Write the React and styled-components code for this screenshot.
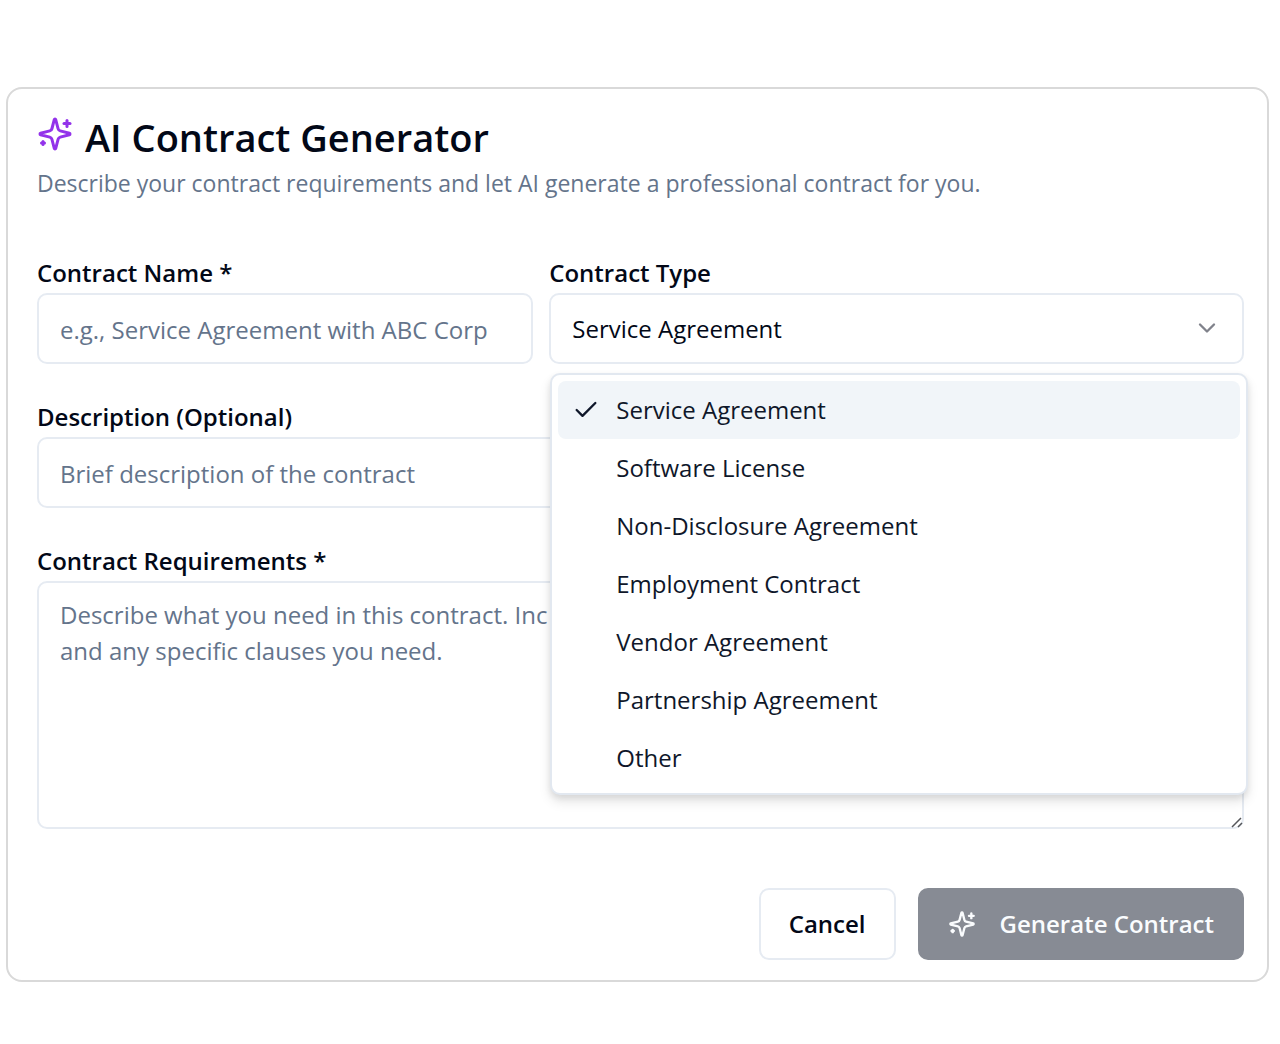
import React, { useState } from "react";
import styled, { createGlobalStyle } from "styled-components";
import { ChevronDown, Check } from "lucide-react";

const GlobalStyle = createGlobalStyle`
  *, *::before, *::after { box-sizing: border-box; }
  body {
    margin: 0;
    background: #ffffff;
    color: #020817;
    font-family: "Open Sans", "Noto Sans", sans-serif;
    font-size: 24px;
    line-height: 36px;
  }
  button, input, select, textarea { font: inherit; color: inherit; }
`;

const Page = styled.main`
  padding: 87px 11px 48px 6px;
`;

const Card = styled.section`
  border: 2px solid #d9d9d9;
  border-radius: 16px;
  padding: 22px 23px 20px 29px;
  background: #ffffff;
`;

const Header = styled.header`
  display: flex;
  flex-direction: column;
  margin-bottom: 52px;
`;

const Title = styled.h1`
  display: flex;
  align-items: center;
  gap: 12px;
  margin: 0;
  font-size: 38px;
  line-height: 52px;
  font-weight: 600;
`;

const TitleIcon = styled.span`
  display: flex;
  flex: none;
  color: #9333ea;
  margin-bottom: 6px;
`;

const Subtitle = styled.p`
  margin: 0;
  font-size: 23px;
  line-height: 40px;
  color: #64748b;
`;

const Form = styled.form`
  display: grid;
  grid-template-columns: minmax(0, 5fr) minmax(0, 7fr);
  gap: 35px 16px;
`;

const Field = styled.div`
  display: flex;
  flex-direction: column;
  gap: 2px;
  min-width: 0;
  grid-column: ${(p) => (p.$wide ? "1 / -1" : "auto")};
`;

const Label = styled.label`
  font-weight: 600;
`;

const control = `
  width: 100%;
  border: 2px solid #e6ebf2;
  border-radius: 10px;
  background: #ffffff;
  outline: none;
  &::placeholder { color: #64748b; opacity: 1; }
`;

const Input = styled.input`
  ${control}
  height: 71px;
  padding: 2px 21px 0;
`;

const TextAreaBox = styled.div`
  position: relative;
`;

const TextArea = styled.textarea`
  ${control}
  display: block;
  height: 248px;
  padding: 14px 21px;
  resize: vertical;
  overflow: hidden;
  &::-webkit-resizer { background: transparent; }
`;

const Grip = styled.svg`
  position: absolute;
  right: 1px;
  bottom: 1px;
  pointer-events: none;
`;

const SelectBox = styled.div`
  position: relative;
`;

const Select = styled.select`
  ${control}
  display: block;
  appearance: none;
  height: 71px;
  padding: 0 64px 0 21px;
`;

const SelectArrow = styled(ChevronDown)`
  position: absolute;
  right: 23px;
  top: 21px;
  color: #80828b;
  pointer-events: none;
`;

const Options = styled.ul`
  position: absolute;
  z-index: 1;
  top: calc(100% + 9px);
  left: 1px;
  right: -4px;
  margin: 0;
  padding: 6px;
  list-style: none;
  border: 2px solid #e2e8f0;
  border-radius: 10px;
  background: #ffffff;
  box-shadow: 0 7px 12px rgba(0, 0, 0, 0.1), 0 3px 6px rgba(0, 0, 0, 0.08);
`;

const Option = styled.li`
  display: flex;
  align-items: center;
  gap: 16px;
  height: 58px;
  padding: 0 14px;
  border-radius: 8px;
  color: #0f172a;
  background: ${(p) => (p.$active ? "#f1f5f9" : "transparent")};
`;

const Tick = styled.span`
  display: flex;
  flex: none;
  width: 28px;
`;

const Actions = styled.footer`
  grid-column: 1 / -1;
  display: flex;
  justify-content: flex-end;
  gap: 22px;
  margin-top: 24px;
`;

const Button = styled.button`
  display: flex;
  align-items: center;
  gap: 24px;
  height: 72px;
  padding: 0 28px;
  border: 2px solid ${(p) => (p.$primary ? "#878b94" : "#e6ebf2")};
  border-radius: 10px;
  background: ${(p) => (p.$primary ? "#878b94" : "#ffffff")};
  color: ${(p) => (p.$primary ? "#fafcfe" : "#020817")};
  font-weight: 600;
`;

function SparklesIcon({ size }) {
  return (
    <svg
      width={size}
      height={size}
      viewBox="0 0 24 24"
      fill="none"
      stroke="currentColor"
      strokeWidth="2"
      strokeLinecap="round"
      strokeLinejoin="round"
      aria-hidden="true"
    >
      <path d="M9.937 15.5A2 2 0 0 0 8.5 14.063l-6.135-1.582a.5.5 0 0 1 0-.962L8.5 9.936A2 2 0 0 0 9.937 8.5l1.582-6.135a.5.5 0 0 1 .963 0L14.063 8.5A2 2 0 0 0 15.5 9.937l6.135 1.581a.5.5 0 0 1 0 .964L15.5 14.063a2 2 0 0 0-1.437 1.437l-1.582 6.135a.5.5 0 0 1-.963 0z" />
      <path d="M20 3v4" />
      <path d="M22 5h-4" />
      <path d="M4 17v2" />
      <path d="M5 18H3" />
    </svg>
  );
}

const contractTypes = [
  "Service Agreement",
  "Software License",
  "Non-Disclosure Agreement",
  "Employment Contract",
  "Vendor Agreement",
  "Partnership Agreement",
  "Other",
];

const requirementsHint =
  "Describe what you need in this contract. Inc parties, scope, payment terms, dates,\nand any specific clauses you need.";

export default function App() {
  const [type, setType] = useState(contractTypes[0]);

  return (
    <>
      <GlobalStyle />
      <Page>
        <Card>
          <Header>
            <Title>
              <TitleIcon>
                <SparklesIcon size={36} />
              </TitleIcon>
              AI Contract Generator
            </Title>
            <Subtitle>
              Describe your contract requirements and let AI generate a professional contract for you.
            </Subtitle>
          </Header>
          <Form onSubmit={(e) => e.preventDefault()}>
            <Field>
              <Label htmlFor="name">Contract Name *</Label>
              <Input id="name" placeholder="e.g., Service Agreement with ABC Corp" />
            </Field>
            <Field>
              <Label htmlFor="type">Contract Type</Label>
              <SelectBox>
                <Select id="type" value={type} onChange={(e) => setType(e.target.value)}>
                  {contractTypes.map((name) => (
                    <option key={name}>{name}</option>
                  ))}
                </Select>
                <SelectArrow size={28} aria-hidden="true" />
                <Options role="listbox" aria-label="Contract Type">
                  {contractTypes.map((name) => (
                    <Option
                      key={name}
                      role="option"
                      aria-selected={name === type}
                      $active={name === type}
                      onClick={() => setType(name)}
                    >
                      <Tick>{name === type && <Check size={28} aria-hidden="true" />}</Tick>
                      {name}
                    </Option>
                  ))}
                </Options>
              </SelectBox>
            </Field>
            <Field $wide>
              <Label htmlFor="description">Description (Optional)</Label>
              <Input id="description" placeholder="Brief description of the contract" />
            </Field>
            <Field $wide>
              <Label htmlFor="requirements">Contract Requirements *</Label>
              <TextAreaBox>
                <TextArea id="requirements" placeholder={requirementsHint} />
                <Grip width="12" height="12" viewBox="0 0 12 12" aria-hidden="true">
                  <path d="M1 11L10 2M7 11l4-4" fill="none" stroke="#55565a" strokeWidth="1.5" />
                </Grip>
              </TextAreaBox>
            </Field>
            <Actions>
              <Button type="button">Cancel</Button>
              <Button type="submit" $primary>
                <SparklesIcon size={28} />
                Generate Contract
              </Button>
            </Actions>
          </Form>
        </Card>
      </Page>
    </>
  );
}
